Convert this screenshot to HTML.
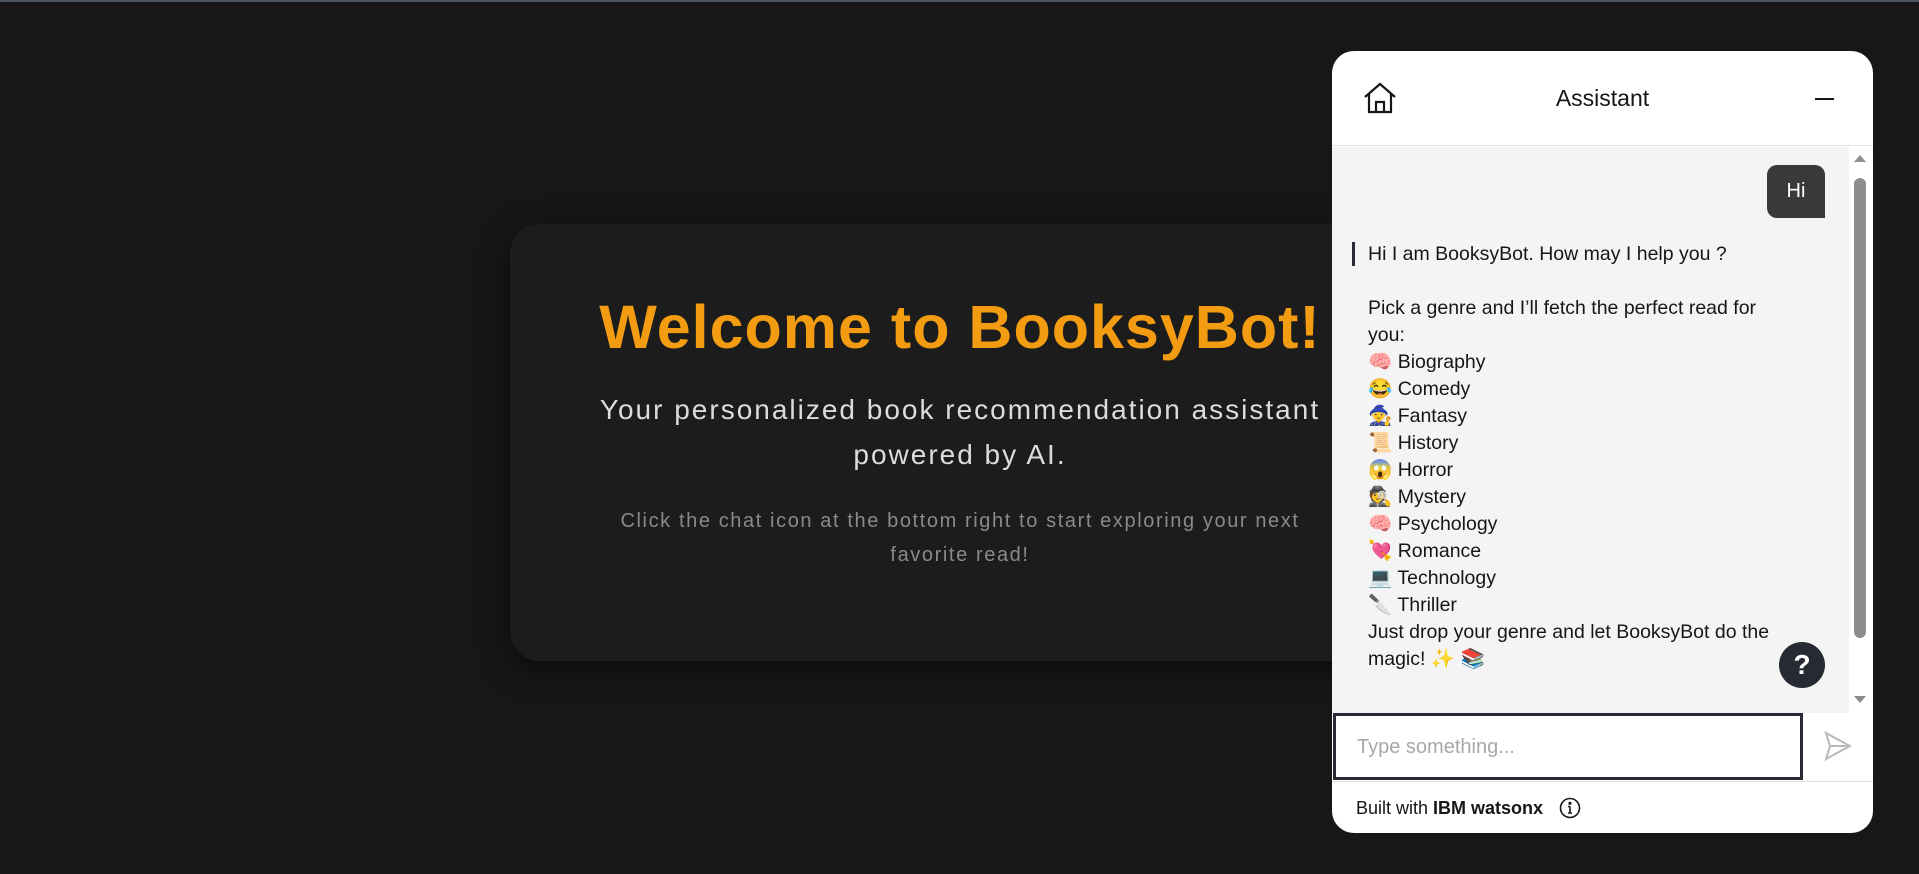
<!DOCTYPE html>
<html><head><meta charset="utf-8"><style>
*{margin:0;padding:0;box-sizing:border-box}
html,body{width:1919px;height:874px;overflow:hidden;background:#171717;font-family:"Liberation Sans",sans-serif}
.topline{position:absolute;left:0;top:0;width:1919px;height:2px;background:#4d5660}
.card{position:absolute;left:510px;top:224px;width:900px;height:437px;background:#1c1c1c;border-radius:30px;box-shadow:0 8px 30px rgba(0,0,0,.55);text-align:center}
.card h1{position:absolute;left:0;right:0;top:68px;font-size:61px;font-weight:bold;color:#f39c12;letter-spacing:1px}
.sub{position:absolute;left:0;right:0;top:163px;font-size:28px;line-height:45px;color:#dcdcdc;letter-spacing:2px}
.hint{position:absolute;left:0;right:0;top:280px;font-size:20px;line-height:34px;color:#8a8a8a;letter-spacing:1.6px}
.panel{position:absolute;left:1332px;top:51px;width:541px;height:782px;background:#fff;border-radius:22px;overflow:hidden}
.hdr{position:absolute;left:0;top:0;width:541px;height:95px;border-bottom:1px solid #e0e0e0}
.title{position:absolute;left:0;right:0;top:34px;text-align:center;font-size:23px;color:#161616}
.msgs{position:absolute;left:0;top:96px;width:517px;height:566px;background:#f4f4f4;overflow:hidden}
.hi{position:absolute;left:435px;top:18px;width:58px;height:53px;background:#393939;color:#fff;border-radius:10px 10px 0 10px;font-size:20px;line-height:53px;text-align:center}
.bar{position:absolute;left:20px;top:95px;width:3px;height:24px;background:#262b36}
.bot{position:absolute;left:36px;top:94px;font-size:19.5px;line-height:27px;color:#161616;white-space:pre}
.help{position:absolute;left:1779px;top:642px;width:46px;height:46px;border-radius:50%;background:#262a33;color:#fff;font-size:28px;font-weight:bold;text-align:center;line-height:46px}
.sb{position:absolute;left:1854px;top:178px;width:12px;height:460px;border-radius:6px;background:#8d8d8d}
.inp{position:absolute;left:1333px;top:713px;width:470px;height:67px;border:3px solid #262b36;background:#fff}
.ph{position:absolute;left:21px;top:20px;font-size:20px;color:#a8a8a8}
.fdiv{position:absolute;left:1332px;top:781px;width:541px;height:1px;background:#e0e0e0}
.foot{position:absolute;left:1356px;top:798px;font-size:18px;color:#161616}
</style></head><body>
<div class="topline"></div>
<div class="card">
<h1>Welcome to BooksyBot!</h1>
<div class="sub">Your personalized book recommendation assistant<br>powered by AI.</div>
<div class="hint">Click the chat icon at the bottom right to start exploring your next<br>favorite read!</div>
</div>
<div class="panel">
<div class="hdr">
<svg style="position:absolute;left:31px;top:31px" width="34" height="32" viewBox="0 0 34 32" fill="none" stroke="#161616" stroke-width="2.2"><path d="M2 15 L17 2 L32 15"/><path d="M6 12 V30 H28 V12"/><path d="M13 30 V20 H21 V30"/></svg>
<div class="title">Assistant</div>
<div style="position:absolute;left:483px;top:47px;width:19px;height:2px;background:#161616"></div>
</div>
<div class="msgs">
<div class="hi">Hi</div>
<div class="bar"></div>
<div class="bot">Hi I am BooksyBot. How may I help you ?

Pick a genre and I’ll fetch the perfect read for
you:
🧠 Biography
😂 Comedy
🧙 Fantasy
📜 History
😱 Horror
🕵 Mystery
🧠 Psychology
💘 Romance
💻 Technology
🔪 Thriller
Just drop your genre and let BooksyBot do the
magic! ✨ 📚</div>
</div>
</div>
<svg style="position:absolute;left:1849px;top:152px" width="22" height="12"><path d="M5 10 L11 3 L17 10Z" fill="#8d8d8d"/></svg>
<div class="sb"></div>
<svg style="position:absolute;left:1849px;top:694px" width="22" height="12"><path d="M5 2 L11 9 L17 2Z" fill="#8d8d8d"/></svg>
<div class="help">?</div>
<div class="inp"><div class="ph">Type something...</div></div>
<svg style="position:absolute;left:1824px;top:731px" width="28" height="30" viewBox="0 0 28 30" fill="none" stroke="#b8b8b8" stroke-width="2"><path d="M2 2 L26 15 L2 28 L6 15 Z M6 15 H26"/></svg>
<div class="fdiv"></div>
<div class="foot">Built with <b>IBM watsonx</b></div>
<svg style="position:absolute;left:1559px;top:797px" width="22" height="22" viewBox="0 0 22 22" fill="none" stroke="#161616" stroke-width="1.6"><circle cx="11" cy="11" r="9.5"/><path d="M11 9.5 V16 M9 16 H13 M9 9.5 H11"/><circle cx="11" cy="6.3" r="0.8" fill="#161616"/></svg>
</body></html>
